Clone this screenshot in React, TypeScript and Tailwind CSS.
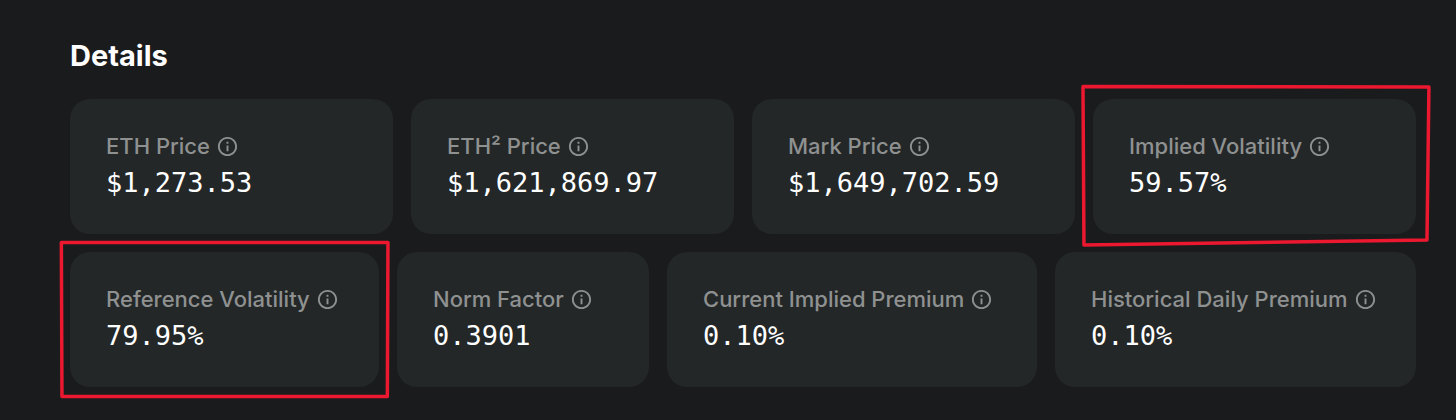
import { MdInfoOutline } from 'react-icons/md'

interface Detail {
  label: string
  value: string
  outline?: string // corner points in card space, 0..100 on both axes
}

const prices: Detail[] = [
  { label: 'ETH Price', value: '$1,273.53' },
  { label: 'ETH² Price', value: '$1,621,869.97' },
  { label: 'Mark Price', value: '$1,649,702.59' },
  { label: 'Implied Volatility', value: '59.57%', outline: '-3.1,-9.3 104,-8.9 103.4,104.4 -2.8,108.1' },
]

const stats: Detail[] = [
  { label: 'Reference Volatility', value: '79.95%', outline: '-2.8,-7 102.9,-7 102.7,107 -2.6,107' },
  { label: 'Norm Factor', value: '0.3901' },
  { label: 'Current Implied Premium', value: '0.10%' },
  { label: 'Historical Daily Premium', value: '0.10%' },
]

function Outline({ points }: { points: string }) {
  return (
    <svg
      className="absolute inset-0 w-full h-full overflow-visible pointer-events-none z-10"
      viewBox="0 0 100 100"
      preserveAspectRatio="none"
      aria-hidden="true"
    >
      <polygon
        points={points}
        fill="none"
        stroke="#eb1830"
        strokeWidth="3.5"
        strokeLinejoin="round"
        vectorEffect="non-scaling-stroke"
      />
    </svg>
  )
}

function DetailCard({ label, value, outline }: Detail) {
  return (
    <div className="relative min-w-0 rounded-[20px] bg-[#232728] px-9 pt-8 pb-[33px]">
      <div className="flex items-center gap-[6px] text-[#8f9191]">
        <span className="text-[22px] leading-[30px] font-medium whitespace-nowrap">{label}</span>
        <button type="button" aria-label={'About ' + label} className="shrink-0">
          <MdInfoOutline className="block w-[23px] h-[23px]" />
        </button>
      </div>
      <p className="mt-1 text-[27px] leading-9 text-white font-['DejaVu_Sans_Mono','Liberation_Mono',monospace]">
        {value}
      </p>
      {outline && <Outline points={outline} />}
    </div>
  )
}

export default function App() {
  return (
    <main className="min-h-screen bg-[#1a1b1d] pt-9 pb-8 pl-[70px] pr-10 font-['Inter','Liberation_Sans',sans-serif]">
      <h1 className="text-[29px] leading-10 font-bold text-white">Details</h1>
      <div className="mt-[23px] grid grid-cols-4 gap-[18px]">
        {prices.map((d) => (
          <DetailCard key={d.label} {...d} />
        ))}
      </div>
      <div className="mt-[18px] grid grid-cols-[309fr_252fr_370fr_361fr] gap-[18px]">
        {stats.map((d) => (
          <DetailCard key={d.label} {...d} />
        ))}
      </div>
    </main>
  )
}
